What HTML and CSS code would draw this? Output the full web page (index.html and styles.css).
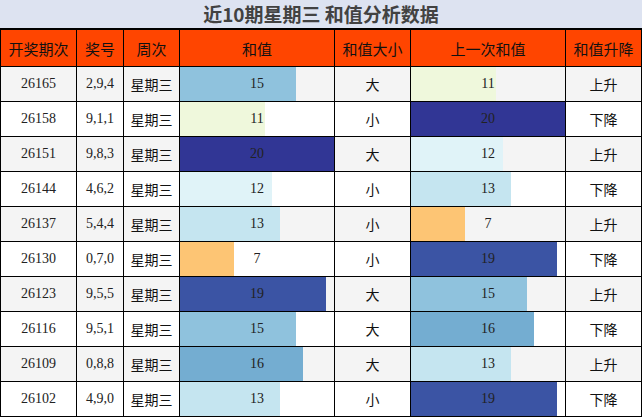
FILE: index.html
```html
<!DOCTYPE html>
<html lang="zh">
<head>
<meta charset="utf-8">
<link rel="stylesheet" href="styles.css">
</head>
<body>
<div class="sheet">
  <div class="title">近10期星期三 和值分析数据</div>
  <table class="grid">
    <colgroup>
      <col class="c-issue"><col class="c-num"><col class="c-week"><col class="c-sum"><col class="c-size"><col class="c-sum"><col class="c-trend">
    </colgroup>
    <thead>
      <tr><th>开奖期次</th><th>奖号</th><th>周次</th><th>和值</th><th>和值大小</th><th>上一次和值</th><th>和值升降</th></tr>
    </thead>
    <tbody>
      <tr><td class="num">26165</td><td class="num">2,9,4</td><td>星期三</td><td class="bar-cell"><div class="bar-wrap"><div class="bar v15" style="width:75%"></div><span class="val">15</span></div></td><td>大</td><td class="bar-cell"><div class="bar-wrap"><div class="bar v11" style="width:55%"></div><span class="val">11</span></div></td><td>上升</td></tr>
      <tr><td class="num">26158</td><td class="num">9,1,1</td><td>星期三</td><td class="bar-cell"><div class="bar-wrap"><div class="bar v11" style="width:55%"></div><span class="val">11</span></div></td><td>小</td><td class="bar-cell"><div class="bar-wrap"><div class="bar v20" style="width:100%"></div><span class="val">20</span></div></td><td>下降</td></tr>
      <tr><td class="num">26151</td><td class="num">9,8,3</td><td>星期三</td><td class="bar-cell"><div class="bar-wrap"><div class="bar v20" style="width:100%"></div><span class="val">20</span></div></td><td>大</td><td class="bar-cell"><div class="bar-wrap"><div class="bar v12" style="width:60%"></div><span class="val">12</span></div></td><td>上升</td></tr>
      <tr><td class="num">26144</td><td class="num">4,6,2</td><td>星期三</td><td class="bar-cell"><div class="bar-wrap"><div class="bar v12" style="width:60%"></div><span class="val">12</span></div></td><td>小</td><td class="bar-cell"><div class="bar-wrap"><div class="bar v13" style="width:65%"></div><span class="val">13</span></div></td><td>下降</td></tr>
      <tr><td class="num">26137</td><td class="num">5,4,4</td><td>星期三</td><td class="bar-cell"><div class="bar-wrap"><div class="bar v13" style="width:65%"></div><span class="val">13</span></div></td><td>小</td><td class="bar-cell"><div class="bar-wrap"><div class="bar v7" style="width:35%"></div><span class="val">7</span></div></td><td>上升</td></tr>
      <tr><td class="num">26130</td><td class="num">0,7,0</td><td>星期三</td><td class="bar-cell"><div class="bar-wrap"><div class="bar v7" style="width:35%"></div><span class="val">7</span></div></td><td>小</td><td class="bar-cell"><div class="bar-wrap"><div class="bar v19" style="width:95%"></div><span class="val">19</span></div></td><td>下降</td></tr>
      <tr><td class="num">26123</td><td class="num">9,5,5</td><td>星期三</td><td class="bar-cell"><div class="bar-wrap"><div class="bar v19" style="width:95%"></div><span class="val">19</span></div></td><td>大</td><td class="bar-cell"><div class="bar-wrap"><div class="bar v15" style="width:75%"></div><span class="val">15</span></div></td><td>上升</td></tr>
      <tr><td class="num">26116</td><td class="num">9,5,1</td><td>星期三</td><td class="bar-cell"><div class="bar-wrap"><div class="bar v15" style="width:75%"></div><span class="val">15</span></div></td><td>大</td><td class="bar-cell"><div class="bar-wrap"><div class="bar v16" style="width:80%"></div><span class="val">16</span></div></td><td>下降</td></tr>
      <tr><td class="num">26109</td><td class="num">0,8,8</td><td>星期三</td><td class="bar-cell"><div class="bar-wrap"><div class="bar v16" style="width:80%"></div><span class="val">16</span></div></td><td>大</td><td class="bar-cell"><div class="bar-wrap"><div class="bar v13" style="width:65%"></div><span class="val">13</span></div></td><td>上升</td></tr>
      <tr><td class="num">26102</td><td class="num">4,9,0</td><td>星期三</td><td class="bar-cell"><div class="bar-wrap"><div class="bar v13" style="width:65%"></div><span class="val">13</span></div></td><td>小</td><td class="bar-cell"><div class="bar-wrap"><div class="bar v19" style="width:95%"></div><span class="val">19</span></div></td><td>下降</td></tr>
    </tbody>
  </table>
</div>
</body>
</html>
```
FILE: styles.css
```css
html, body {
  margin: 0;
  padding: 0;
  background: #ffffff;
}
.sheet {
  width: 642px;
  font-family: "Noto Sans CJK SC", "Noto Sans", sans-serif;
}
.title {
  height: 28px;
  line-height: 28px;
  background: #dde3f1;
  color: #424242;
  font-weight: bold;
  font-size: 19px;
  text-align: center;
  border-bottom: 1px solid #000;
}
.grid {
  width: 641px;
  border-collapse: collapse;
  table-layout: fixed;
}
.c-issue { width: 76px; }
.c-num { width: 47px; }
.c-week { width: 56px; }
.c-sum { width: 155px; }
.c-size { width: 76px; }
.c-trend { width: 76px; }
.grid th,
.grid td {
  border: 1px solid #000;
  padding: 0;
  text-align: center;
  vertical-align: middle;
  overflow: hidden;
}
.grid th {
  height: 36px;
  background: #ff4500;
  color: #111;
  font-weight: normal;
  font-size: 15px;
}
.grid td {
  height: 34px;
  font-size: 14px;
  color: #111;
}
.grid tbody tr:nth-child(odd) td { background: #f4f4f4; }
.grid tbody tr:nth-child(even) td { background: #ffffff; }
.grid td.num {
  font-family: "Liberation Serif", serif;
  color: #222;
}
.grid td.bar-cell { padding: 0; }
.bar-wrap {
  display: grid;
  height: 34px;
}
.bar, .val {
  grid-area: 1 / 1;
}
.bar {
  justify-self: start;
  height: 100%;
}
.val {
  align-self: center;
  justify-self: center;
  font-family: "Liberation Serif", serif;
  font-size: 14px;
  color: #222;
}
.v7 { background: #fdc574; }
.v11 { background: #eff8dc; }
.v12 { background: #e0f3f8; }
.v13 { background: #c5e5f0; }
.v15 { background: #8fc2dd; }
.v16 { background: #74add1; }
.v19 { background: #3b54a4; }
.v20 { background: #313695; }
```
